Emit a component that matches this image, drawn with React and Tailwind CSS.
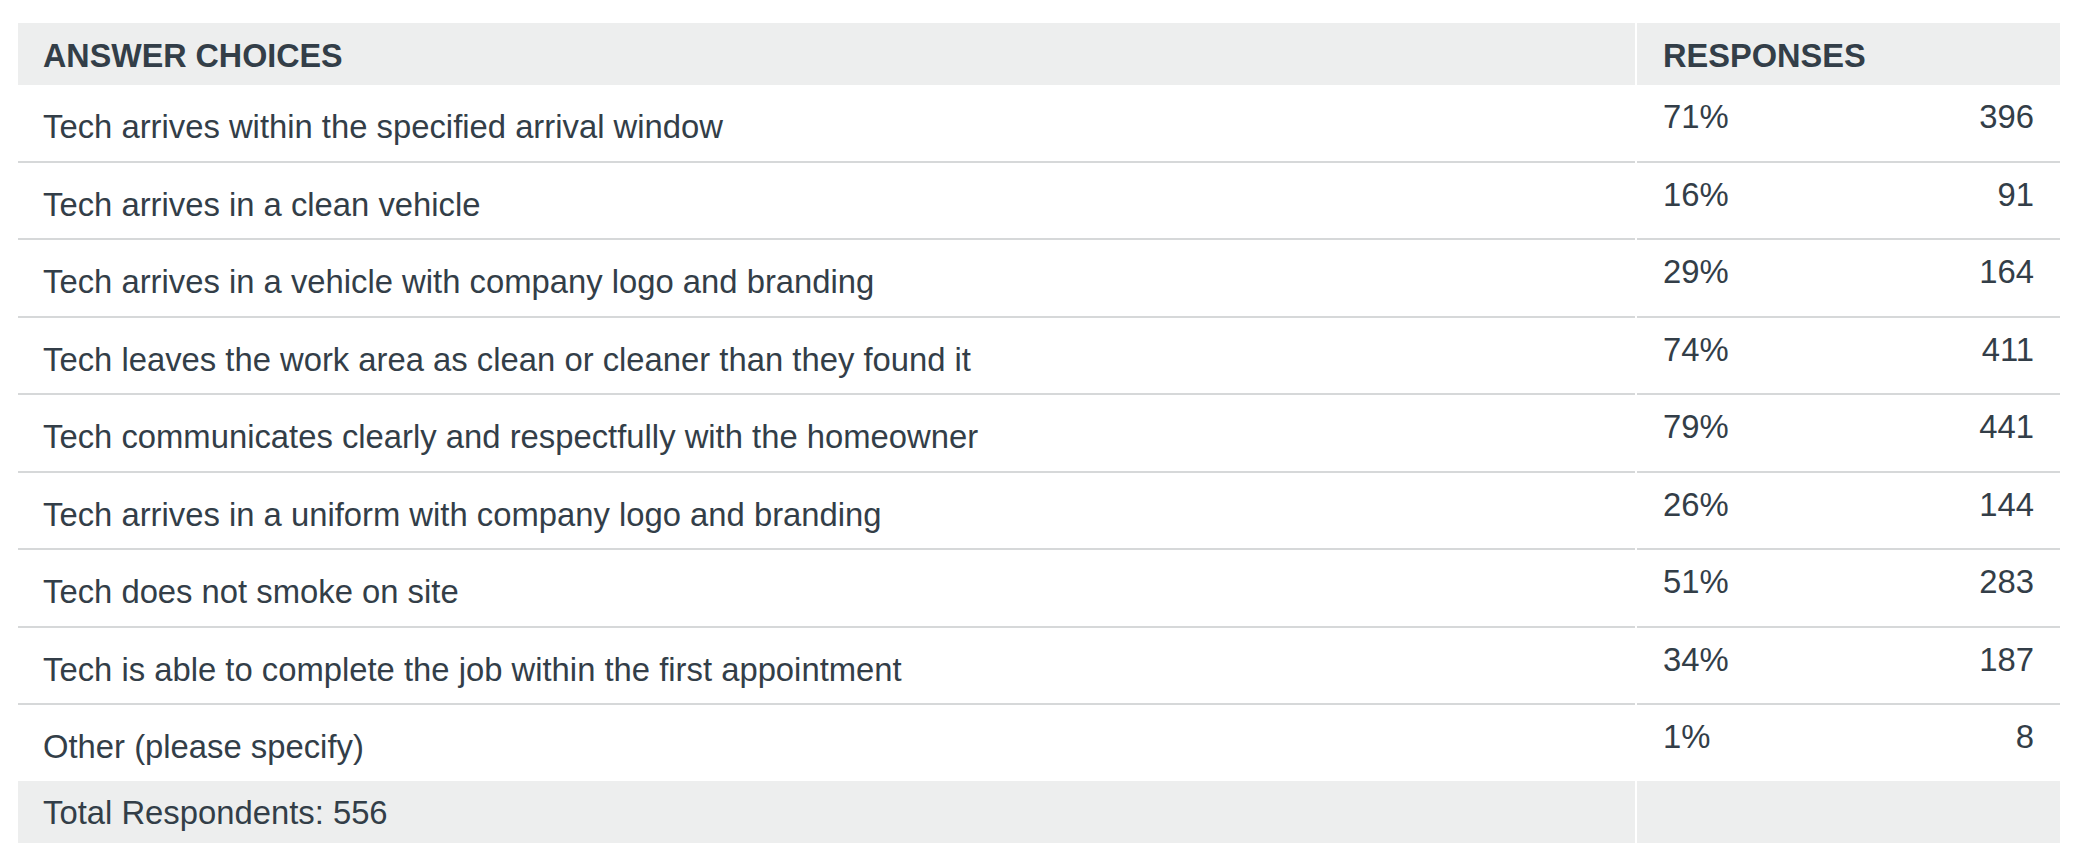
import React from "react";

const rows = [
  { label: "Tech arrives within the specified arrival window", pct: "71%", count: 396 },
  { label: "Tech arrives in a clean vehicle", pct: "16%", count: 91 },
  { label: "Tech arrives in a vehicle with company logo and branding", pct: "29%", count: 164 },
  { label: "Tech leaves the work area as clean or cleaner than they found it", pct: "74%", count: 411 },
  { label: "Tech communicates clearly and respectfully with the homeowner", pct: "79%", count: 441 },
  { label: "Tech arrives in a uniform with company logo and branding", pct: "26%", count: 144 },
  { label: "Tech does not smoke on site", pct: "51%", count: 283 },
  { label: "Tech is able to complete the job within the first appointment", pct: "34%", count: 187 },
  { label: "Other (please specify)", pct: "1%", count: 8 },
];

export default function App() {
  return (
    <div className="min-h-screen bg-white pt-[23px] pl-[18px] font-['Liberation_Sans',Arial,sans-serif] text-[32.8px] leading-[36px] text-[#333e48]">
      <div className="w-[2042px]">
        {/* Header */}
        <div className="grid grid-cols-[1617px_423px] gap-x-[2px]">
          <div className="h-[62px] bg-[#edeeee] px-[25px] pt-[14.5px] text-[32.3px] font-bold">ANSWER CHOICES</div>
          <div className="h-[62px] bg-[#edeeee] px-[26px] pt-[14.5px] text-[32.6px] font-bold">RESPONSES</div>
        </div>

        {/* Rows */}
        {rows.map((row, idx) => {
          const last = idx === rows.length - 1;
          const cell = last ? "h-[76px]" : "h-[77.5px] border-b-2 border-[#d6d8d9]";
          return (
            <div key={idx} className="grid grid-cols-[1617px_423px] gap-x-[2px]">
              <div className={`${cell} px-[25px] pt-[24px]`}>{row.label}</div>
              <div className={`${cell} flex justify-between px-[26px] pt-[14px]`}>
                <span>{row.pct}</span>
                <span>{row.count}</span>
              </div>
            </div>
          );
        })}

        {/* Footer */}
        <div className="grid grid-cols-[1617px_423px] gap-x-[2px]">
          <div className="h-[62px] bg-[#edeeee] px-[25px] pt-[13.5px]">Total Respondents: 556</div>
          <div className="h-[62px] bg-[#edeeee]"></div>
        </div>
      </div>
    </div>
  );
}
